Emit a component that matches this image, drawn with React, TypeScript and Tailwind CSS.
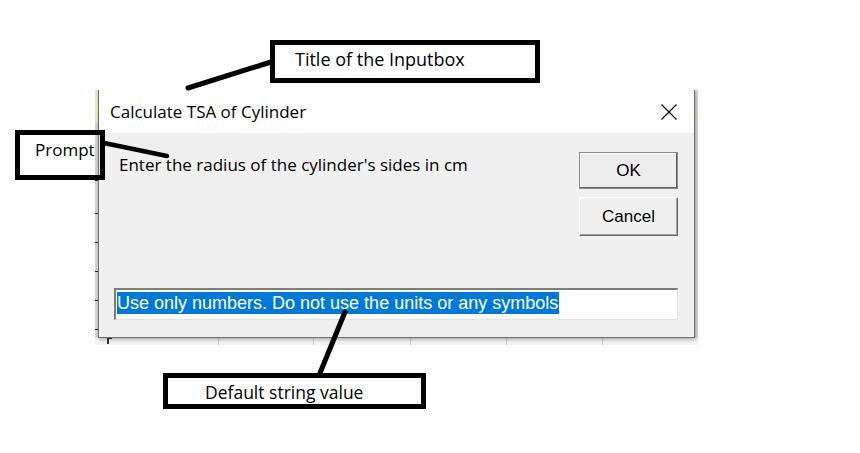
import React from "react";

const sheetCols = [218, 313, 410, 506, 602];
const rowTicks = [180, 213, 242, 271, 300, 329];

function CloseIcon() {
  return (
    <svg width="16" height="16" viewBox="0 0 16 16" className="block">
      <path d="M0.5 0.5 L15.5 15.5 M15.5 0.5 L0.5 15.5" stroke="#000" strokeWidth="1.1" fill="none" />
    </svg>
  );
}

export default function App() {
  const sans = { fontFamily: '"Open Sans", "Noto Sans", sans-serif' } as React.CSSProperties;
  const arial = { fontFamily: '"Liberation Sans", Arial, sans-serif' } as React.CSSProperties;
  const note = { fontFamily: '"Open Sans", "Noto Sans", sans-serif' } as React.CSSProperties;

  return (
    <div className="relative w-[860px] h-[453px] bg-white overflow-hidden">
      <div className="pt-[90px] pl-[95px]">
        {/* pasted screenshot */}
        <div className="relative flex flex-col w-[603px] h-[255px]">
          <div className="flex h-[248px]">
            {/* left sheet strip */}
            <div className="relative w-[3px] flex flex-col">
              <div className="h-[33px] bg-[#e9e3bf]" />
              <div className="flex-1 bg-[#d0d0d0]" />
              {rowTicks.map((y) => (
                <div key={y} className="absolute left-0 w-[3px] h-px bg-[#202020]" style={{ top: y - 90 }} />
              ))}
            </div>
            {/* dialog */}
            <div className="flex flex-col w-[597px] h-[248px] border-x border-b border-[#6f6f6f] shadow-[1px_2px_3px_rgba(0,0,0,0.25)] z-10">
              <div className="h-[43px] bg-white flex items-center justify-between pl-[11px] pr-[17px]">
                <span className="text-[17px] leading-[22px] text-black mt-[1px]" style={sans}>
                  Calculate TSA of Cylinder
                </span>
                <CloseIcon />
              </div>
              <div className="flex-1 bg-[#f0f0f0] flex flex-col">
                <div className="flex justify-between">
                  <div className="ml-[20px] mt-[21px] text-[17px] leading-[22px] text-black" style={sans}>
                    Enter the radius of the cylinder's sides in cm
                  </div>
                  <div className="flex flex-col gap-[8px] mt-[19px] mr-[16px]">
                    <div
                      className="w-[99px] h-[37px] flex items-center justify-center bg-[#ededed] border border-[#8a8a8a] shadow-[inset_-1px_-1px_0_#5f5f5f,inset_1px_1px_0_#ffffff] text-[17px] text-black"
                      style={arial}
                    >
                      OK
                    </div>
                    <div
                      className="w-[99px] h-[39px] flex items-center justify-center bg-[#f0f0f0] border-t border-l border-[#ffffff] border-r border-b border-r-[#696969] border-b-[#696969] shadow-[inset_-1px_-1px_0_#a0a0a0] text-[17px] text-black"
                      style={arial}
                    >
                      Cancel
                    </div>
                  </div>
                </div>
                <div className="mt-auto mb-[17px] ml-[15px] mr-[16px] h-[32px] bg-white border-t-2 border-l-2 border-t-[#7d7d7d] border-l-[#7d7d7d] border-b border-r border-b-[#e3e3e3] border-r-[#e3e3e3] pl-[1px] pt-[1px]">
                  <span className="inline-block bg-[#0078d7] text-white text-[18px] leading-[22px] pr-[1px]" style={arial}>
                    Use only numbers. Do not use the units or any symbols
                  </span>
                </div>
              </div>
            </div>
            {/* right sheet strip */}
            <div className="relative w-[3px] flex flex-col">
              <div className="h-[24px] bg-[#d8d8d8]" />
              <div className="h-[4px] bg-[#e6dc9c]" />
              <div className="flex-1 bg-[#d6d6d6]" />
            </div>
          </div>
          {/* bottom sheet strip */}
          <div className="relative h-[7px] bg-[#f3f3f3]">
            {sheetCols.map((x) => (
              <div key={x} className="absolute top-0 h-[7px] w-px bg-[#c8c8c8]" style={{ left: x - 95 }} />
            ))}
            <div className="absolute top-0 left-[12px] h-[6px] w-[2px] bg-[#333]" />
            <div className="absolute top-0 left-[12px] w-[5px] h-px bg-[#333]" />
          </div>
        </div>
      </div>

      {/* annotations */}
      <svg className="absolute inset-0 pointer-events-none z-20" width="860" height="453">
        <line x1="188" y1="88" x2="271" y2="62" stroke="#000" strokeWidth="5" strokeLinecap="round" />
        <line x1="104" y1="143" x2="167" y2="156" stroke="#000" strokeWidth="4.5" strokeLinecap="round" />
        <line x1="345" y1="312" x2="320" y2="373" stroke="#000" strokeWidth="5" strokeLinecap="round" />
      </svg>

      <div className="absolute z-20 left-[270px] top-[40px] w-[270px] h-[43px] border-[5px] border-black bg-white pl-[20px] pt-[3px]">
        <span className="text-[18px] leading-[22px] text-black" style={note}>Title of the Inputbox</span>
      </div>
      <div className="absolute z-20 left-[15px] top-[130px] w-[90px] h-[50px] border-[5px] border-black pl-[15px] pt-[3px]">
        <span className="text-[17px] leading-[22px] text-black" style={note}>Prompt</span>
      </div>
      <div className="absolute z-20 left-[163px] top-[373px] w-[263px] h-[36px] border-[5px] border-black bg-white pl-[37px] pt-[3px]">
        <span className="text-[17.5px] leading-[22px] text-black" style={note}>Default string value</span>
      </div>
    </div>
  );
}
